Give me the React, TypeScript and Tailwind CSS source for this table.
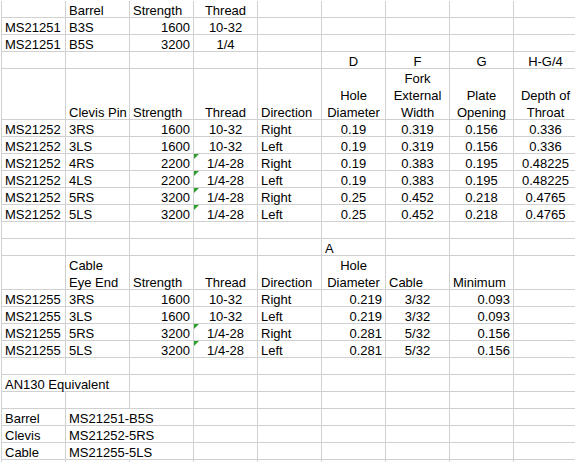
type Align = "l" | "r" | "c"

interface Cell {
  text?: string
  align?: Align
  span?: number
  flag?: boolean
}

interface Row {
  units?: number
  cells: (Cell | null)[]
}

const L = (text: string, span?: number): Cell => ({ text, align: "l", span })
const R = (text: string): Cell => ({ text, align: "r" })
const C = (text: string, flag?: boolean): Cell => ({ text, align: "c", flag })

const clevis = (part: string, str: string, thread: string, dir: string, d: string, f: string, g: string, h: string, flag = false): Row => ({
  cells: [L("MS21252"), L(part), R(str), C(thread, flag), L(dir), C(d), C(f), C(g), C(h)],
})

const cable = (part: string, str: string, thread: string, dir: string, a: string, size: string, min: string, flag = false): Row => ({
  cells: [L("MS21255"), L(part), R(str), C(thread, flag), L(dir), R(a), C(size), R(min)],
})

const rows: Row[] = [
  { cells: [null, L("Barrel"), L("Strength"), C("Thread")] },
  { cells: [L("MS21251"), L("B3S"), R("1600"), C("10-32")] },
  { cells: [L("MS21251"), L("B5S"), R("3200"), C("1/4")] },
  { cells: [null, null, null, null, null, C("D"), C("F"), C("G"), C("H-G/4")] },
  {
    units: 3,
    cells: [
      null,
      L("Clevis Pin"),
      L("Strength"),
      C("Thread"),
      L("Direction"),
      C("Hole\nDiameter"),
      C("Fork\nExternal\nWidth"),
      C("Plate\nOpening"),
      C("Depth of\nThroat"),
    ],
  },
  clevis("3RS", "1600", "10-32", "Right", "0.19", "0.319", "0.156", "0.336"),
  clevis("3LS", "1600", "10-32", "Left", "0.19", "0.319", "0.156", "0.336"),
  clevis("4RS", "2200", "1/4-28", "Right", "0.19", "0.383", "0.195", "0.48225", true),
  clevis("4LS", "2200", "1/4-28", "Left", "0.19", "0.383", "0.195", "0.48225", true),
  clevis("5RS", "3200", "1/4-28", "Right", "0.25", "0.452", "0.218", "0.4765", true),
  clevis("5LS", "3200", "1/4-28", "Left", "0.25", "0.452", "0.218", "0.4765", true),
  { cells: [] },
  { cells: [null, null, null, null, null, L("A")] },
  {
    units: 2,
    cells: [null, L("Cable\nEye End"), L("Strength"), C("Thread"), L("Direction"), C("Hole\nDiameter"), L("Cable"), L("Minimum")],
  },
  cable("3RS", "1600", "10-32", "Right", "0.219", "3/32", "0.093"),
  cable("3LS", "1600", "10-32", "Left", "0.219", "3/32", "0.093"),
  cable("5RS", "3200", "1/4-28", "Right", "0.281", "5/32", "0.156", true),
  cable("5LS", "3200", "1/4-28", "Left", "0.281", "5/32", "0.156", true),
  { cells: [] },
  { cells: [L("AN130 Equivalent", 2)] },
  { cells: [] },
  { cells: [L("Barrel"), L("MS21251-B5S", 2)] },
  { cells: [L("Clevis"), L("MS21252-5RS", 2)] },
  { cells: [L("Cable"), L("MS21255-5LS", 2)] },
  { cells: [] },
]

const COLS = 9

const alignClass: Record<Align, string> = {
  l: "justify-start text-left pl-[3px]",
  r: "justify-end text-right pr-[3px]",
  c: "justify-center text-center",
}

function SheetRow({ row }: { row: Row }) {
  const height = row.units === 3 ? "h-[51px]" : row.units === 2 ? "h-[34px]" : "h-[17px]"
  const out: JSX.Element[] = []
  let col = 0
  while (col < COLS) {
    const cell = row.cells[col] || null
    const span = cell?.span || 1
    const width = span === 2 ? "w-[128px]" : "w-[64px]"
    out.push(
      <div
        key={col}
        className={`relative flex shrink-0 items-end whitespace-pre-line border-r border-b border-[#d0d0d0] ${width} ${height} ${cell?.align ? alignClass[cell.align] : ""}`}
      >
        {cell?.flag && (
          <span className="absolute left-0 top-0 h-0 w-0 border-t-[5px] border-r-[5px] border-t-[#2e9e2e] border-r-transparent" />
        )}
        <span className="mb-[-2px] leading-[17px]">{cell?.text}</span>
      </div>
    )
    col += span
  }
  return <div className="flex">{out}</div>
}

export default function App() {
  return (
    <div
      className="h-[462px] w-[575px] overflow-hidden bg-white pt-[1px] text-[13px] text-black"
      style={{ fontFamily: '"Liberation Sans", Arial, sans-serif' }}
    >
      <div className="ml-[1px] border-l border-[#d0d0d0]">
        {rows.map((row, i) => (
          <SheetRow key={i} row={row} />
        ))}
      </div>
    </div>
  )
}
